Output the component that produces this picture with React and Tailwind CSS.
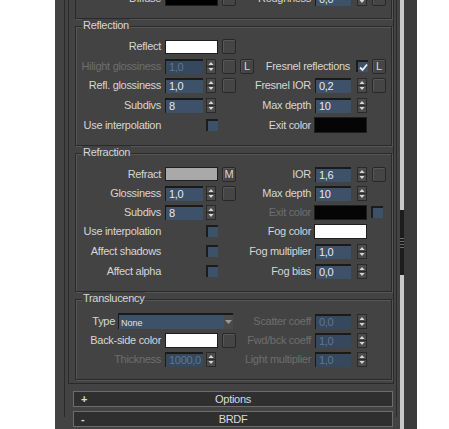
import React from 'react';

const BG = 'bg-[#434343]';

function Spinner() {
    return (
        <svg width="10" height="15" viewBox="0 0 10 15" className="shrink-0">
            <rect x="0" y="0" width="10" height="15" fill="#4b4b4b" />
            <rect x="0.5" y="0.5" width="9" height="14" fill="none" stroke="#2a2a2a" />
            <path d="M2.5 6 L5 3 L7.5 6 Z" fill="#d6d6d6" />
            <path d="M2.5 9 L5 12 L7.5 9 Z" fill="#d6d6d6" />
            <path d="M1 7.5 H9" stroke="#2a2a2a" />
        </svg>
    );
}

function Field({ value, disabled, wide }) {
    return (
        <div
            className={`${wide ? 'w-[38px]' : 'w-[36px]'} h-[15px] shrink-0 border-t-2 border-l border-[#1a1a1a] pl-[3px] flex items-center text-[11px] leading-none whitespace-nowrap overflow-hidden ${
                disabled ? 'bg-[#35485d] text-[#5f7792]' : 'bg-[#3d5169] text-[#e6eaf0]'
            }`}
        >
            {value}
        </div>
    );
}

function Btn({ children, className = '' }) {
    return (
        <div className={`w-[14px] h-[15px] shrink-0 rounded-[2px] border border-[#282828] bg-[#454545] shadow-[inset_1px_1px_0_#575757] flex items-center justify-center text-[11px] leading-none text-[#d8d8d8] ${className}`}>
            {children}
        </div>
    );
}

function Check({ checked, className = '' }) {
    return (
        <div className={`w-[12px] h-[12px] shrink-0 border-t-2 border-l-2 border-[#1c1c1c] bg-[#3d5169] flex items-center justify-center ${className}`}>
            {checked && (
                <svg width="9" height="9" viewBox="0 0 9 9">
                    <path d="M1 4.5 L3.5 7 L8 1.5" fill="none" stroke="#f2f2f2" strokeWidth="1.8" />
                </svg>
            )}
        </div>
    );
}

function Swatch({ color, tall, className = '' }) {
    return <div className={`w-[53px] ${tall ? 'h-[16px]' : 'h-[14px]'} shrink-0 border border-[#1e1e1e] ${color} ${className}`} />;
}

function LeftLabel({ children, disabled }) {
    return (
        <div className={`w-[89px] shrink-0 flex justify-end pr-[4px] whitespace-nowrap leading-none ${disabled ? 'text-[#6e6e6e]' : 'text-[#d6d6d6]'}`}>
            {children}
        </div>
    );
}

function RightLabel({ children, disabled, wide }) {
    return (
        <div className={`${wide ? 'w-[102px] pr-[6px]' : 'w-[61px] pr-[4px]'} shrink-0 flex justify-end whitespace-nowrap leading-none ${disabled ? 'text-[#6e6e6e]' : 'text-[#d6d6d6]'}`}>
            {children}
        </div>
    );
}

function Row({ h, left, right }) {
    return (
        <div className={`flex items-center ${h}`}>
            <div className="w-[178px] shrink-0 flex items-center">{left}</div>
            <div className="flex items-center">{right}</div>
        </div>
    );
}

function Group({ title, className = '', children }) {
    return (
        <div className={`ml-[6px] w-[317px] mt-[7px] border border-[#2a2a2a] shadow-[1px_1px_0_#565656,inset_1px_1px_0_#565656] relative ${className}`}>
            <div className={`absolute -top-[8px] left-[6px] px-[1px] h-[13px] leading-[13px] text-[#d6d6d6] ${BG}`}>{title}</div>
            {children}
        </div>
    );
}

function RollBar({ sign, title, className = '' }) {
    return (
        <div className={`ml-[8px] w-[320px] h-[16px] border border-[#6c6c6c] bg-[#2f2f2f] flex items-center text-[#dcdcdc] leading-none ${className}`}>
            <span className="w-[20px] pl-[7px] font-bold">{sign}</span>
            <span className="flex-1 text-center pr-[20px]">{title}</span>
        </div>
    );
}

export default function App() {
    return (
        <div className="w-[449px] h-[429px] bg-white overflow-hidden font-['Liberation_Sans',Arial,sans-serif] text-[11px] tracking-[-0.3px]">
            <div className={`ml-[55px] w-[362px] h-full flex ${BG}`}>
                {/* panel content */}
                <div className="w-[345px] h-full">
                    <div className="ml-[9px] w-[333px] h-full border-x border-[#2a2a2a]">
                        {/* rollout body */}
                        <div className="ml-[3px] w-[326px] border-x border-b border-[#2a2a2a] pb-[3px]">
                            {/* previous group, cut at the top */}
                            <div className="ml-[6px] w-[317px] -mt-[12px] border-x border-b border-[#2a2a2a] shadow-[1px_1px_0_#565656] pb-[10px]">
                                <Row
                                    h="h-[20px]"
                                    left={<>
                                        <LeftLabel>Diffuse</LeftLabel>
                                        <Swatch color="bg-black" tall />
                                        <Btn className="ml-[4px]" />
                                    </>}
                                    right={<>
                                        <RightLabel>Roughness</RightLabel>
                                        <Field value="0,0" />
                                        <div className="ml-[6px]"><Spinner /></div>
                                        <Btn className="ml-[5px]" />
                                    </>}
                                />
                            </div>

                            {/* Reflection */}
                            <Group title="Reflection" className="pt-[10px] pb-[10px]">
                                <Row
                                    h="h-[19px]"
                                    left={<>
                                        <LeftLabel>Reflect</LeftLabel>
                                        <Swatch color="bg-white" />
                                        <Btn className="ml-[4px]" />
                                    </>}
                                />
                                <Row
                                    h="h-[20px]"
                                    left={<>
                                        <LeftLabel disabled>Hilight glossiness</LeftLabel>
                                        <Field value="1,0" disabled wide />
                                        <div className="ml-[3px]"><Spinner /></div>
                                        <Btn className="ml-[6px]" />
                                        <Btn className="ml-[4px]">L</Btn>
                                    </>}
                                    right={<>
                                        <RightLabel wide>Fresnel reflections</RightLabel>
                                        <Check checked />
                                        <Btn className="ml-[4px]">L</Btn>
                                    </>}
                                />
                                <Row
                                    h="h-[19px]"
                                    left={<>
                                        <LeftLabel>Refl. glossiness</LeftLabel>
                                        <Field value="1,0" wide />
                                        <div className="ml-[3px]"><Spinner /></div>
                                        <Btn className="ml-[6px]" />
                                    </>}
                                    right={<>
                                        <RightLabel>Fresnel IOR</RightLabel>
                                        <Field value="0,2" />
                                        <div className="ml-[6px]"><Spinner /></div>
                                        <Btn className="ml-[5px]" />
                                    </>}
                                />
                                <Row
                                    h="h-[20px]"
                                    left={<>
                                        <LeftLabel>Subdivs</LeftLabel>
                                        <Field value="8" wide />
                                        <div className="ml-[3px]"><Spinner /></div>
                                    </>}
                                    right={<>
                                        <RightLabel>Max depth</RightLabel>
                                        <Field value="10" />
                                        <div className="ml-[6px]"><Spinner /></div>
                                    </>}
                                />
                                <Row
                                    h="h-[20px]"
                                    left={<>
                                        <LeftLabel>Use interpolation</LeftLabel>
                                        <Check className="ml-[41px]" />
                                    </>}
                                    right={<>
                                        <RightLabel>Exit color</RightLabel>
                                        <Swatch color="bg-[#050505]" tall className="-ml-[1px]" />
                                    </>}
                                />
                            </Group>

                            {/* Refraction */}
                            <Group title="Refraction" className="pt-[10px] pb-[10px]">
                                <Row
                                    h="h-[20px]"
                                    left={<>
                                        <LeftLabel>Refract</LeftLabel>
                                        <Swatch color="bg-[#a9a9a9]" />
                                        <Btn className="ml-[4px]">M</Btn>
                                    </>}
                                    right={<>
                                        <RightLabel>IOR</RightLabel>
                                        <Field value="1,6" />
                                        <div className="ml-[6px]"><Spinner /></div>
                                        <Btn className="ml-[5px]" />
                                    </>}
                                />
                                <Row
                                    h="h-[19px]"
                                    left={<>
                                        <LeftLabel>Glossiness</LeftLabel>
                                        <Field value="1,0" wide />
                                        <div className="ml-[3px]"><Spinner /></div>
                                        <Btn className="ml-[6px]" />
                                    </>}
                                    right={<>
                                        <RightLabel>Max depth</RightLabel>
                                        <Field value="10" />
                                        <div className="ml-[6px]"><Spinner /></div>
                                    </>}
                                />
                                <Row
                                    h="h-[18px]"
                                    left={<>
                                        <LeftLabel>Subdivs</LeftLabel>
                                        <Field value="8" wide />
                                        <div className="ml-[3px]"><Spinner /></div>
                                    </>}
                                    right={<>
                                        <RightLabel disabled>Exit color</RightLabel>
                                        <Swatch color="bg-[#050505]" className="-ml-[1px] h-[15px]" />
                                        <Check className="ml-[4px]" />
                                    </>}
                                />
                                <Row
                                    h="h-[20px]"
                                    left={<>
                                        <LeftLabel>Use interpolation</LeftLabel>
                                        <Check className="ml-[41px]" />
                                    </>}
                                    right={<>
                                        <RightLabel>Fog color</RightLabel>
                                        <Swatch color="bg-white" className="-ml-[1px] h-[15px]" />
                                    </>}
                                />
                                <Row
                                    h="h-[20px]"
                                    left={<>
                                        <LeftLabel>Affect shadows</LeftLabel>
                                        <Check className="ml-[41px]" />
                                    </>}
                                    right={<>
                                        <RightLabel>Fog multiplier</RightLabel>
                                        <Field value="1,0" />
                                        <div className="ml-[6px]"><Spinner /></div>
                                    </>}
                                />
                                <Row
                                    h="h-[20px]"
                                    left={<>
                                        <LeftLabel>Affect alpha</LeftLabel>
                                        <Check className="ml-[41px]" />
                                    </>}
                                    right={<>
                                        <RightLabel>Fog bias</RightLabel>
                                        <Field value="0,0" />
                                        <div className="ml-[6px]"><Spinner /></div>
                                    </>}
                                />
                            </Group>

                            {/* Translucency */}
                            <Group title="Translucency" className="pt-[11px] pb-[9px]">
                                <Row
                                    h="h-[20px]"
                                    left={<>
                                        <div className="w-[42px] shrink-0 flex justify-end pr-[3px] leading-none text-[#d6d6d6] self-start mt-[3px]">Type</div>
                                        <div className="w-[115px] h-[16px] shrink-0 border-t-2 border-l border-[#1a1a1a] bg-[#3d5169] flex items-center">
                                            <span className="flex-1 pl-[2px] pt-[3px] text-[9px] leading-none text-[#e2e2e2] tracking-normal">None</span>
                                            <div className="w-[9px] h-full bg-[#4a4a4a] flex items-center justify-center">
                                                <svg width="7" height="4" viewBox="0 0 7 4"><path d="M0 0 H7 L3.5 4 Z" fill="#9a9a9a" /></svg>
                                            </div>
                                        </div>
                                    </>}
                                    right={<>
                                        <RightLabel disabled>Scatter coeff</RightLabel>
                                        <Field value="0,0" disabled />
                                        <div className="ml-[6px]"><Spinner /></div>
                                    </>}
                                />
                                <Row
                                    h="h-[18px]"
                                    left={<>
                                        <LeftLabel>Back-side color</LeftLabel>
                                        <Swatch color="bg-white" className="h-[15px]" />
                                        <Btn className="ml-[4px]" />
                                    </>}
                                    right={<>
                                        <RightLabel disabled>Fwd/bck coeff</RightLabel>
                                        <Field value="1,0" disabled />
                                        <div className="ml-[6px]"><Spinner /></div>
                                    </>}
                                />
                                <Row
                                    h="h-[21px]"
                                    left={<>
                                        <LeftLabel disabled>Thickness</LeftLabel>
                                        <Field value="1000,0" disabled wide />
                                        <div className="ml-[3px]"><Spinner /></div>
                                    </>}
                                    right={<>
                                        <RightLabel disabled>Light multiplier</RightLabel>
                                        <Field value="1,0" disabled />
                                        <div className="ml-[6px]"><Spinner /></div>
                                    </>}
                                />
                            </Group>
                        </div>

                        <RollBar sign="+" title="Options" className="mt-[7px]" />
                        <RollBar sign="-" title="BRDF" className="mt-[4px]" />
                    </div>
                </div>

                {/* scrollbar */}
                <div className="w-[4px] h-full flex flex-col bg-[#c8c8c8]">
                    <div className="h-[210px]" />
                    <div className="h-[65px] bg-[#1c1c1c] flex flex-col items-center justify-center gap-[2px]">
                        <div className="w-[4px] h-px bg-[#6a6a6a]" />
                        <div className="w-[4px] h-px bg-[#6a6a6a]" />
                        <div className="w-[4px] h-px bg-[#6a6a6a]" />
                        <div className="w-[4px] h-px bg-[#6a6a6a]" />
                    </div>
                </div>
                <div className="w-[13px] h-full bg-[#3a3a3a]" />
            </div>
        </div>
    );
}
